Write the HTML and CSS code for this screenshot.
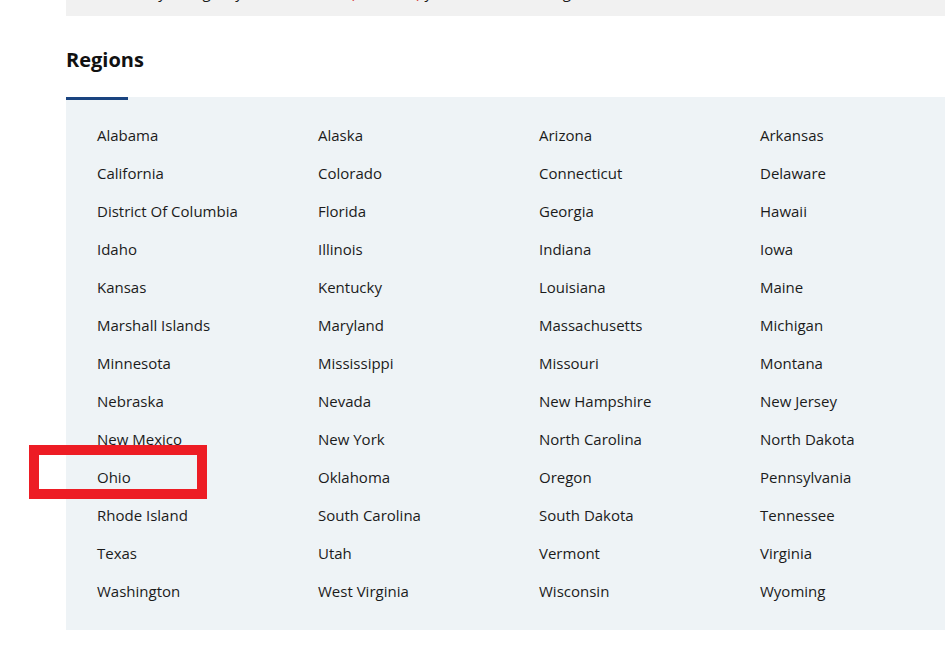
FILE: index.html
```html
<!DOCTYPE html>
<html lang="en">
<head>
<meta charset="utf-8">
<title>Regions</title>
<link rel="stylesheet" href="styles.css">
</head>
<body>
<div class="page">
  <div class="top-box"><p class="top-text">To find your agency contact, select <span class="red">(the state)</span> you live in, <span class="red">or</span> the region listed below.</p></div>
  <h2 class="heading">Regions</h2>
  <div class="tab-line"></div>
  <div class="panel">
    <div class="grid">
      <span class="item">Alabama</span><span class="item">Alaska</span><span class="item">Arizona</span><span class="item">Arkansas</span>
      <span class="item">California</span><span class="item">Colorado</span><span class="item">Connecticut</span><span class="item">Delaware</span>
      <span class="item">District Of Columbia</span><span class="item">Florida</span><span class="item">Georgia</span><span class="item">Hawaii</span>
      <span class="item">Idaho</span><span class="item">Illinois</span><span class="item">Indiana</span><span class="item">Iowa</span>
      <span class="item">Kansas</span><span class="item">Kentucky</span><span class="item">Louisiana</span><span class="item">Maine</span>
      <span class="item">Marshall Islands</span><span class="item">Maryland</span><span class="item">Massachusetts</span><span class="item">Michigan</span>
      <span class="item">Minnesota</span><span class="item">Mississippi</span><span class="item">Missouri</span><span class="item">Montana</span>
      <span class="item">Nebraska</span><span class="item">Nevada</span><span class="item">New Hampshire</span><span class="item">New Jersey</span>
      <span class="item">New Mexico</span><span class="item">New York</span><span class="item">North Carolina</span><span class="item">North Dakota</span>
      <span class="item">Ohio</span><span class="item">Oklahoma</span><span class="item">Oregon</span><span class="item">Pennsylvania</span>
      <span class="item">Rhode Island</span><span class="item">South Carolina</span><span class="item">South Dakota</span><span class="item">Tennessee</span>
      <span class="item">Texas</span><span class="item">Utah</span><span class="item">Vermont</span><span class="item">Virginia</span>
      <span class="item">Washington</span><span class="item">West Virginia</span><span class="item">Wisconsin</span><span class="item">Wyoming</span>
    </div>
  </div>
  <div class="highlight"></div>
</div>
</body>
</html>
```

FILE: styles.css
```css
html, body {
  margin: 0;
  padding: 0;
  background: #ffffff;
}
body {
  font-family: "Open Sans", "Noto Sans", sans-serif;
  color: #1b1b1b;
}
.page {
  position: relative;
  padding-left: 66px;
  width: 879px;
  overflow: hidden;
  height: 647px;
}
.top-box {
  height: 16px;
  background: #f1f1f1;
  overflow: hidden;
  position: relative;
}
.top-text {
  margin: 0;
  position: relative;
  top: -18px;
  padding-left: 40px;
  font-size: 15px;
  line-height: 20px;
  white-space: nowrap;
  color: #1b1b1b;
}
.red {
  color: #d83933;
}
.heading {
  margin: 0;
  padding-top: 31px;
  height: 50px;
  font-size: 20px;
  line-height: 26px;
  font-weight: 700;
  color: #111;
  box-sizing: content-box;
}
.tab-line {
  position: relative;
  z-index: 1;
  width: 62px;
  height: 3px;
  margin-bottom: -3px;
  background: #1a4480;
}
.panel {
  background: #eef3f6;
  padding: 19px 0 20px 31px;
}
.grid {
  display: grid;
  grid-template-columns: repeat(4, 221px);
  grid-auto-rows: 38px;
}
.item {
  font-size: 15px;
  line-height: 38px;
  white-space: nowrap;
  color: #1b1b1b;
}
.highlight {
  position: absolute;
  left: 29px;
  top: 445px;
  width: 158px;
  height: 34px;
  border: 10px solid #ed1c24;
}
```
